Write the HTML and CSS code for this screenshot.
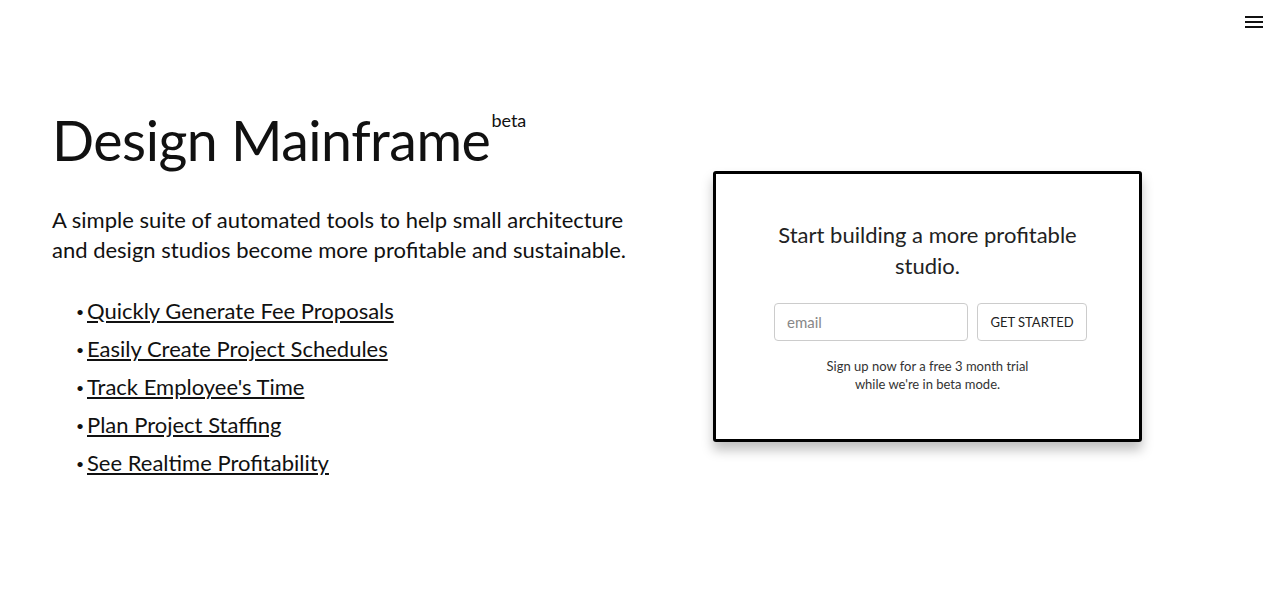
FILE: index.html
```html
<!DOCTYPE html>
<html lang="en">
<head>
    <meta charset="UTF-8">
    <meta name="viewport" content="width=device-width, initial-scale=1.0">
    <title>Design Mainframe</title>
    <link rel="stylesheet" href="styles.css">
</head>
<body>

<header class="topbar">
    <button class="menu-button" aria-label="Menu">
        <svg width="18" height="13" viewBox="0 0 18 13">
            <rect x="0" y="1" width="18" height="2" fill="#111"/>
            <rect x="0" y="6" width="18" height="2" fill="#111"/>
            <rect x="0" y="11" width="18" height="2" fill="#111"/>
        </svg>
    </button>
</header>

<main class="hero">
    <section class="intro">
        <h1 class="title">Design Mainframe<sup>beta</sup></h1>
        <p class="lead">A simple suite of automated tools to help small architecture and design studios become more profitable and sustainable.</p>
        <ul class="features">
            <li><a href="#">Quickly Generate Fee Proposals</a></li>
            <li><a href="#">Easily Create Project Schedules</a></li>
            <li><a href="#">Track Employee's Time</a></li>
            <li><a href="#">Plan Project Staffing</a></li>
            <li><a href="#">See Realtime Profitability</a></li>
        </ul>
    </section>

    <section class="signup-wrap">
        <div class="signup-card">
            <h2>Start building a more profitable studio.</h2>
            <form class="signup-form">
                <input type="email" placeholder="email">
                <button type="submit">GET STARTED</button>
            </form>
            <p class="note">Sign up now for a free 3 month trial<br>while we're in beta mode.</p>
        </div>
    </section>
</main>

</body>
</html>
```

FILE: styles.css
```css
body {
    font-family: Lato, "Open Sans", sans-serif;
    background-color: #fff;
    color: #111;
    margin: 0;
}
.topbar {
    display: flex;
    justify-content: flex-end;
    padding: 13px 17px 0 0;
    height: 20px;
}
.menu-button {
    background: none;
    border: none;
    padding: 0;
    cursor: pointer;
}
.hero {
    display: flex;
    padding: 0 0 0 52px;
}
.intro {
    width: 600px;
}
.title {
    font-size: 55.5px;
    font-weight: 400;
    letter-spacing: -0.5px;
    margin: 79px 0 0 0;
    line-height: 1;
}
.title sup {
    font-size: 18px;
    vertical-align: top;
    position: relative;
    top: -1px;
    margin-left: 1px;
    letter-spacing: 0;
}
.lead {
    font-size: 22px;
    line-height: 30px;
    margin: 37px 0 0 0;
    width: 600px;
}
.features {
    list-style: none;
    padding: 0 0 0 24px;
    margin: 27px 0 0 0;
}
.features li {
    font-size: 22px;
    line-height: 38px;
    height: 38px;
}
.features li::before {
    content: "\2022";
    display: inline-block;
    font-size: 14px;
    line-height: 1;
    width: 11px;
    vertical-align: 2px;
}
.features a {
    color: #111;
}
.signup-wrap {
    padding: 138px 0 0 61px;
}
.signup-card {
    box-sizing: border-box;
    width: 429px;
    height: 271px;
    border: 3px solid #000;
    border-radius: 3px;
    box-shadow: 0 8px 12px rgba(0, 0, 0, 0.25);
    padding: 45px 20px 0 26px;
    text-align: center;
    color: #222;
}
.signup-card h2 {
    font-size: 22px;
    font-weight: 400;
    line-height: 31px;
    margin: 0 auto;
    width: 320px;
    position: relative;
    left: -3px;
}
.signup-form {
    display: flex;
    justify-content: center;
    gap: 9px;
    margin-top: 22px;
}
.signup-form input {
    box-sizing: border-box;
    width: 194px;
    height: 38px;
    border: 1px solid #ccc;
    border-radius: 4px;
    padding: 0 12px;
    font-family: inherit;
    font-size: 15px;
}
.signup-form input::placeholder {
    color: #888;
}
.signup-form button {
    box-sizing: border-box;
    width: 110px;
    height: 38px;
    background: #fff;
    border: 1px solid #ccc;
    border-radius: 4px;
    font-family: inherit;
    font-size: 13px;
    color: #222;
}
.note {
    font-size: 13px;
    line-height: 18px;
    margin: 16px 0 0 -6px;
    color: #333;
}
```
